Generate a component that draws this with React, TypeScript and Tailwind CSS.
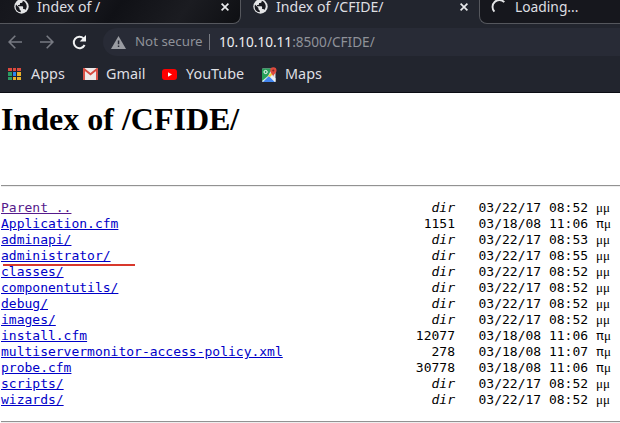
import React from 'react';

type Row = { name: string; size: string; date: string; pm?: boolean };

const rows: Row[] = [
  { name: 'Parent ..', size: 'dir', date: '03/22/17 08:52' },
  { name: 'Application.cfm', size: '1151', date: '03/18/08 11:06', pm: true },
  { name: 'adminapi/', size: 'dir', date: '03/22/17 08:53' },
  { name: 'administrator/', size: 'dir', date: '03/22/17 08:55' },
  { name: 'classes/', size: 'dir', date: '03/22/17 08:52' },
  { name: 'componentutils/', size: 'dir', date: '03/22/17 08:52' },
  { name: 'debug/', size: 'dir', date: '03/22/17 08:52' },
  { name: 'images/', size: 'dir', date: '03/22/17 08:52' },
  { name: 'install.cfm', size: '12077', date: '03/18/08 11:06', pm: true },
  { name: 'multiservermonitor-access-policy.xml', size: '278', date: '03/18/08 11:07', pm: true },
  { name: 'probe.cfm', size: '30778', date: '03/18/08 11:06', pm: true },
  { name: 'scripts/', size: 'dir', date: '03/22/17 08:52' },
  { name: 'wizards/', size: 'dir', date: '03/22/17 08:52' },
];

function Globe() {
  return (
    <svg className="h-[15px] w-[15px] shrink-0" viewBox="0 0 15 15">
      <circle cx="7.5" cy="7.5" r="7.2" fill="#e4e5e7" />
      <path d="M2 5.6 5.4 9v1.2l1.4 1.5v1.6A5.9 5.9 0 0 1 1.6 7.5ZM8.7 1.8v.8c0 .8-.6 1.3-1.4 1.3H6v1.3c0 .5-.4.8-.8.8H4v1.3h4.3c.5 0 .8.4.8.8v2h.9c.7 0 1.1.4 1.3 1A5.8 5.8 0 0 0 8.7 1.8Z" fill="#17181e" />
    </svg>
  );
}

function Close() {
  return (
    <svg className="h-2 w-2 shrink-0" viewBox="0 0 8 8">
      <path d="m.6.6 6.8 6.8m0-6.8L.6 7.4" stroke="#e8e9eb" strokeWidth="1.7" />
    </svg>
  );
}

function Arrow({ right }: { right?: boolean }) {
  return (
    <svg className={right ? 'h-[14px] w-[14px] rotate-180' : 'h-[14px] w-[14px]'} viewBox="0 0 14 14" fill="none" stroke="#777a82" strokeWidth="1.6">
      <path d="M14 7H1.3M7.3.8 1.1 7l6.2 6.2" />
    </svg>
  );
}

const dots = ['#dc4a3e', '#dc4a3e', '#dc4a3e', '#2b9b63', '#2f87ed', '#e8b32c', '#2b9b63', '#e8b32c', '#e8b32c'];

function Browser() {
  return (
    <header className="h-[93px] border-b border-[#0b0d14] bg-[#22252e] font-['Noto_Sans',sans-serif] text-[14.4px] text-[#dedfe2]">
      <div className="flex h-6 text-[14.1px]">
        <div className="flex h-6 w-[241px] shrink-0 items-start rounded-br-[8px] border-r border-b border-[#55575d] bg-[linear-gradient(125deg,#15161c_0%,#1b1c22_28%,#101116_48%,#1b1c21_75%,#0e0f13_100%)] pl-[14px]">
          <div className="mt-[-1px]"><Globe /></div>
          <span className="mt-[-1px] ml-2 w-[184px] leading-4">Index of /</span>
          <div className="mt-[3px]"><Close /></div>
        </div>
        <div className="flex w-[238px] shrink-0 items-start pl-[12px]">
          <div className="mt-[-1px]"><Globe /></div>
          <span className="mt-[-1px] ml-2 w-[184px] leading-4">Index of /CFIDE/</span>
          <div className="mt-[3px]"><Close /></div>
        </div>
        <div className="flex h-6 grow items-start rounded-bl-[8px] border-b border-l border-[#55575d] bg-[#16171d] pl-[11px]">
          <svg className="mt-[-1px] h-[15px] w-[15px] shrink-0" viewBox="0 0 15 15">
            <path d="M3.4 12.6A6.4 6.4 0 0 1 13.3 3.2" fill="none" stroke="#e4e5e7" strokeWidth="1.9" />
          </svg>
          <span className="mt-[-1px] ml-[9px] text-[13.8px] leading-4">Loading...</span>
        </div>
      </div>
      <div className="flex h-8 items-center pt-1 pl-2">
        <Arrow />
        <div className="ml-[18px] flex"><Arrow right /></div>
        <svg className="ml-[18px] h-[15px] w-[15px]" viewBox="0 0 15 15">
          <path d="M12.6 10A5.7 5.7 0 1 1 11.5 3.4L13 5" fill="none" stroke="#f2f3f4" strokeWidth="2" />
          <path d="M14 0v6.4H7.7Z" fill="#f2f3f4" />
        </svg>
        <div className="ml-4 flex h-7 grow items-center rounded-l-full bg-[#282b36] pl-2">
          <svg className="h-[13px] w-[15px]" viewBox="0 0 15 13">
            <path d="M7.5 0 15 13H0Z" fill="#9a9ca2" />
            <path d="M6.8 4.5h1.5v3.8H6.8ZM6.8 9.4h1.5v1.5H6.8Z" fill="#282b36" />
          </svg>
          <span className="ml-[9px] w-[74px] whitespace-nowrap text-[13.3px] text-[#8f9299]">Not secure</span>
          <span className="h-4 w-px bg-[#777a82]" />
          <span className="ml-[9px] text-[13.6px] text-[#8f9299]"><span className="text-[#eeeff1]">10.10.10.11</span>:8500/CFIDE/</span>
        </div>
      </div>
      <div className="flex h-9 items-center pl-2">
        <div className="grid w-[13px] grid-cols-[repeat(3,3.6px)] gap-[1.1px]">
          {dots.map((c, i) => <span key={i} className="h-[3.6px] w-[3.6px]" style={{ backgroundColor: c }} />)}
        </div>
        <span className="ml-[10px] w-[52px] pb-px">Apps</span>
        <svg className="h-[12px] w-[15px]" viewBox="0 0 15 12">
          <rect width="15" height="12" rx="1" fill="#eee9e8" />
          <path d="M1 12V1l6.5 5.3L14 1v11" fill="none" stroke="#d64b40" strokeWidth="1.9" />
        </svg>
        <span className="ml-2 w-[57px] pb-px">Gmail</span>
        <svg className="mr-[8px] -ml-px h-[11px] w-[15px]" viewBox="0 0 15 11">
          <rect width="15" height="11" rx="3" fill="#f00" />
          <path d="m6 3.2 4 2.3-4 2.3Z" fill="#fff" />
        </svg>
        <span className="w-[77px] pb-px pl-px">YouTube</span>
        <svg className="h-[15px] w-[15px]" viewBox="0 0 15 15">
          <rect y="1.5" width="13.5" height="13.5" rx="1" fill="#dce6eb" />
          <path d="M0 2.5q0-1 1-1h9L6 9l-6 5Z" fill="#28a05a" />
          <path d="m1 15 6-6 6 6Z" fill="#4386ef" />
          <path d="m7 9 2-2 4.5 4.5V15H13Z" fill="#eef2f5" />
          <path d="m6 9 5-5 1 2-4 4Z" fill="#f5cd38" />
          <circle cx="3.6" cy="5" r="1.6" fill="none" stroke="#fff" />
          <path d="M11.2 10c0-3-3-3.6-3-6.5a3 3 0 0 1 6.3 0c0 2.9-3.3 3.5-3.3 6.5Z" fill="#df4a3d" />
          <circle cx="11.3" cy="3.5" r="1.1" fill="#812b27" />
        </svg>
        <span className="ml-2 pb-px">Maps</span>
      </div>
    </header>
  );
}

export default function App() {
  return (
    <div className="h-[423px] w-[620px] overflow-hidden bg-white text-black">
      <Browser />
      <main className="pl-px">
        <h1 className="pt-2 font-['Liberation_Serif',serif] text-[32px] leading-9 font-bold">Index of /CFIDE/</h1>
        <hr className="mt-12 h-[2px] border-t border-b border-t-[#929292] border-b-[#eeeeee]" />
        <div className="mt-[13px] font-['DejaVu_Sans_Mono',monospace] text-[13px] leading-4">
          {rows.map((r, i) => (
            <div key={r.name} className="relative flex h-4 whitespace-pre">
              <div className="w-[376px]">
                <a className={i === 0 ? 'text-[#551a8b] underline' : 'text-[#0000c8] underline'}>{r.name}</a>
              </div>
              <span className={r.size === 'dir' ? 'w-[78px] text-right italic' : 'w-[78px] text-right'}>{r.size}</span>
              <span className="ml-[23.5px]">{r.date}</span>
              <span className="ml-2 font-['Liberation_Serif',serif]">{r.pm ? <><span className="font-['DejaVu_Sans_Mono',monospace]">π</span>μ</> : 'μμ'}</span>
              {i === 3 && <span className="absolute top-[16px] left-[2px] h-[2px] w-[132px] bg-[#d8382c]" />}
            </div>
          ))}
        </div>
        <hr className="mt-[13px] h-[2px] border-t border-b border-t-[#929292] border-b-[#eeeeee]" />
      </main>
    </div>
  );
}
